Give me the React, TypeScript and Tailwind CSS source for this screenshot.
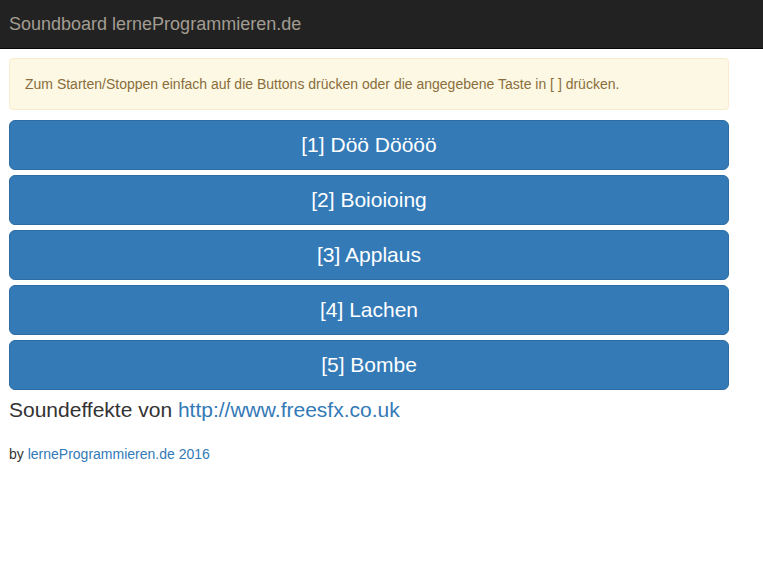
import React from "react";

const sounds = ["[1] Döö Döööö", "[2] Boioioing", "[3] Applaus", "[4] Lachen", "[5] Bombe"];

export default function App() {
  return (
    <div className="min-h-[569px] bg-white text-[#333]" style={{ fontFamily: '"Liberation Sans", Arial, sans-serif' }}>
      <nav className="h-[49px] bg-[#222] border-b border-[#080808] flex items-center px-[9px]">
        <span className="text-[18px] text-[#a29d92] leading-[20px]">Soundboard lerneProgrammieren.de</span>
      </nav>
      <div className="px-[9px] pt-[9px] w-[738px]">
        <div className="bg-[#fcf8e3] border border-[#faebcc] rounded-[4px] text-[#8a6d3b] text-[14px] leading-[20px] px-[15px] py-[15px]">
          Zum Starten/Stoppen einfach auf die Buttons drücken oder die angegebene Taste in [ ] drücken.
        </div>
        <div className="mt-[10px] flex flex-col gap-[5px]">
          {sounds.map((s) => (
            <button
              key={s}
              className="h-[50px] w-full bg-[#337ab7] border border-[#2e6da4] rounded-[6px] text-white text-[21px] leading-[28px]"
            >
              {s}
            </button>
          ))}
        </div>
        <div className="mt-[8px] text-[21px] leading-[24px]">
          Soundeffekte von <a className="text-[#337ab7]">http://www.freesfx.co.uk</a>
        </div>
        <div className="mt-[22px] text-[14px] leading-[20px]">
          by <a className="text-[#337ab7]">lerneProgrammieren.de 2016</a>
        </div>
      </div>
    </div>
  );
}
